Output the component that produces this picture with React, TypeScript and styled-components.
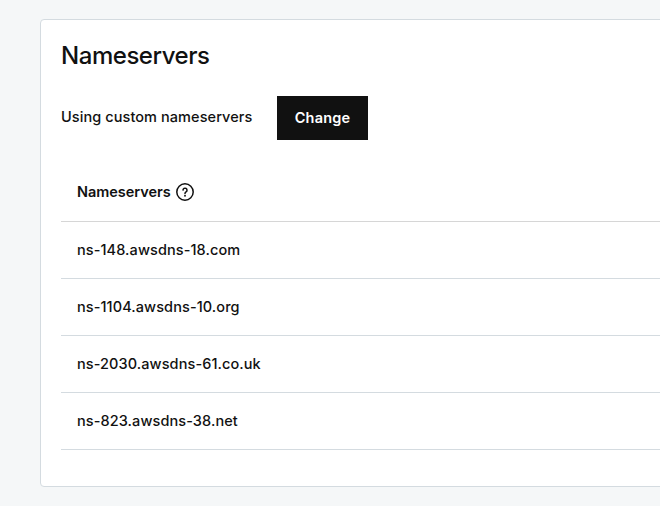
import React from "react";
import styled, { createGlobalStyle } from "styled-components";

const GlobalStyle = createGlobalStyle`
  * { box-sizing: border-box; }
  body {
    margin: 0;
    background: #f5f7f8;
    color: #111;
    font-family: Inter, "Liberation Sans", sans-serif;
    font-weight: 500;
    overflow: hidden;
  }
`;

const Page = styled.main`
  height: 506px;
  padding: 19px 0 0 40px;
  overflow: hidden;
`;

const Card = styled.section`
  width: 640px;
  height: 468px;
  padding: 20px 0 0 20px;
  background: #fff;
  border: 1px solid #d4dbe0;
  border-radius: 4px;
`;

const Title = styled.h1`
  margin: 0;
  height: 32px;
  line-height: 31px;
  font-size: 24px;
  font-weight: 500;
  letter-spacing: -0.45px;
`;

const Label = styled.span`
  width: 192px;
  padding-bottom: 4px;
  white-space: nowrap;
  letter-spacing: 0.08px;
`;

const Toolbar = styled.div`
  display: flex;
  align-items: center;
  height: 44px;
  margin-top: 24px;
  gap: 24px;
  font-size: 14.5px;
`;

const ChangeButton = styled.button`
  width: 91px;
  height: 44px;
  padding: 0 0 2px;
  border: 0;
  background: #111;
  color: #fff;
  font: 600 14.5px Inter, sans-serif;
  letter-spacing: 0.2px;
`;

const Table = styled.div`
  margin-top: 25px;
`;

const Row = styled.div<{ $header?: boolean }>`
  display: flex;
  align-items: center;
  height: 57px;
  padding: 0 0 2px 16px;
  border-bottom: 1px solid ${(p) => (p.$header ? "#d6d6d6" : "#d4dbe0")};
  font-size: 14.5px;
  letter-spacing: 0.09px;
`;

const ColumnName = styled.span`
  width: 98px;
  padding-bottom: 2px;
  white-space: nowrap;
  font-weight: 600;
  letter-spacing: -0.04px;
`;

const HelpIcon = () => (
  <svg width="20" height="20" viewBox="0 0 20 20" fill="none" stroke="#111" strokeWidth="1.5">
    <circle cx="10" cy="10" r="8.2" />
    <path d="M8 8.1a2 2 0 1 1 3 1.8c-.7.4-1 .8-1 1.5" strokeLinecap="round" />
    <circle cx="10" cy="13.7" r=".95" fill="#111" stroke="none" />
  </svg>
);

const servers = [
  "ns-148.awsdns-18.com",
  "ns-1104.awsdns-10.org",
  "ns-2030.awsdns-61.co.uk",
  "ns-823.awsdns-38.net",
];

export default function App() {
  return (
    <Page>
      <GlobalStyle />
      <Card>
        <Title>Nameservers</Title>
        <Toolbar>
          <Label>Using custom nameservers</Label>
          <ChangeButton>Change</ChangeButton>
        </Toolbar>
        <Table>
          <Row $header>
            <ColumnName>Nameservers</ColumnName>
            <HelpIcon />
          </Row>
          {servers.map((name) => (
            <Row key={name}>{name}</Row>
          ))}
        </Table>
      </Card>
    </Page>
  );
}
